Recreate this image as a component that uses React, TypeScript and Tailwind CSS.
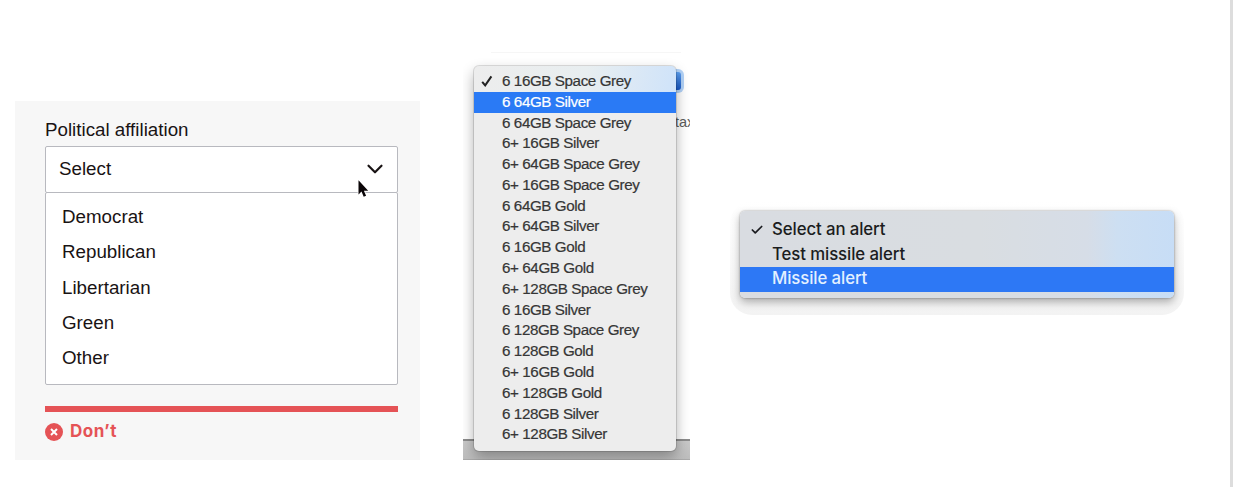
import { Check, ChevronDown } from "lucide-react";

const parties = ["Democrat", "Republican", "Libertarian", "Green", "Other"];

const phones = [
  "6 16GB Space Grey",
  "6 64GB Silver",
  "6 64GB Space Grey",
  "6+ 16GB Silver",
  "6+ 64GB Space Grey",
  "6+ 16GB Space Grey",
  "6 64GB Gold",
  "6+ 64GB Silver",
  "6 16GB Gold",
  "6+ 64GB Gold",
  "6+ 128GB Space Grey",
  "6 16GB Silver",
  "6 128GB Space Grey",
  "6 128GB Gold",
  "6+ 16GB Gold",
  "6+ 128GB Gold",
  "6 128GB Silver",
  "6+ 128GB Silver",
];

const alerts = ["Select an alert", "Test missile alert", "Missile alert"];

function Pointer() {
  return (
    <svg className="absolute left-[311px] top-[32px]" width="13" height="20" viewBox="0 0 13 20">
      <path
        d="M1.5 1.3v14.2l3-2.9 2.2 5.2 2.4-1-2.2-5.1h4.3z"
        fill="#0a0507"
        stroke="#fff"
        strokeWidth="1.6"
        paintOrder="stroke"
      />
    </svg>
  );
}

function AffiliationSelect() {
  return (
    <section className="mt-[101px] h-[359px] w-[405px] shrink-0 bg-[#f7f7f7] pl-[30px] pr-[22px] pt-[17px] text-[#191314]">
      <div className="h-[28px] text-[18.75px] leading-[24px]">Political affiliation</div>
      <div className="relative flex h-[47px] items-center justify-between rounded-[2px] border border-[#b8b9bf] bg-white pb-[2px] pl-[13px] pr-[12px]">
        <span className="text-[18.75px] leading-[24px]">Select</span>
        <ChevronDown className="size-[20px] scale-[1.3] overflow-visible" strokeWidth={2} />
        <Pointer />
      </div>
      <ul className="-mt-px h-[193px] rounded-[2px] border border-[#b8b9bf] bg-white pl-4 pt-[6px]">
        {parties.map((p) => (
          <li key={p} className="h-[35.3px] text-[18.75px] leading-[35.3px]">
            {p}
          </li>
        ))}
      </ul>
      <div className="mt-[21px] h-[6px] bg-[#e55356]" />
      <div className="mt-[10px] flex h-[19px] items-center gap-[7px] text-[#e55356]">
        <svg width="18" height="18" viewBox="0 0 18 18">
          <circle cx="9" cy="9" r="9" fill="#e55356" />
          <path d="M6 6l6 6M12 6l-6 6" stroke="#fff" strokeWidth="2" />
        </svg>
        <span className="font-['Inter',sans-serif] text-[17px] font-bold leading-[19px] tracking-[0.5px]">Don’t</span>
      </div>
    </section>
  );
}

function PhoneMenu() {
  return (
    <section className="relative ml-[43px] mt-[52px] h-[408px] w-[227px] shrink-0 overflow-hidden pl-[11px] pt-[14px]">
      <div className="absolute left-[28px] top-0 h-px w-[190px] bg-[#f6f6f6]" />
      <div className="absolute left-[200px] top-[17px] h-[24px] w-[21px] rounded-[6px] border-[3px] border-l-0 border-[#b3d3f8] bg-gradient-to-b from-[#5c9ff0] to-[#1658c8]" />
      <div className="absolute left-[212px] top-[61px] text-[14.5px] leading-[18px] text-[#5c5c5c]">tax</div>
      <div className="absolute bottom-0 left-0 h-[21px] w-full border-b border-t-2 border-b-[#aaa] border-t-[#8c8c8c] bg-gradient-to-b from-[#c9c9c9] to-[#bdbdbd]" />
      <ul className="relative h-[385px] w-[202px] rounded-[5px] bg-[#ededed] bg-[linear-gradient(100deg,#ededed_0%,#e8eef0_55%,#cfe3fa_100%)] bg-[length:100%_26px] bg-no-repeat pt-[5px] text-[15.2px] tracking-[-0.41px] text-[#363636] shadow-[0_0_0_1px_rgba(0,0,0,0.12),0_6px_14px_rgba(0,0,0,0.32)]">
        {phones.map((name, i) => (
          <li
            key={name}
            className={
              i === 1
                ? "flex h-[20.79px] items-center bg-[#2a7af5] text-white [-webkit-text-stroke:0.2px_currentColor]"
                : "flex h-[20.79px] items-center [-webkit-text-stroke:0.2px_currentColor]"
            }
          >
            <span className="flex w-[28px] justify-center pr-[3px]">
              {i === 0 && (
                <svg width="12" height="12" viewBox="0 0 12 12" fill="none">
                  <path d="M1.2 6.8l3 3.6L10.4 1.4" stroke="#222" strokeWidth="2" />
                </svg>
              )}
            </span>
            <span className="whitespace-nowrap">{name}</span>
          </li>
        ))}
      </ul>
    </section>
  );
}

function AlertMenu() {
  return (
    <section className="ml-[40px] mt-[201px] h-[114px] w-[454px] shrink-0 rounded-[22px] bg-gradient-to-b from-white to-[#f3f3f3] px-[10px] pt-[10px]">
      <ul className="h-[87px] rounded-[5px] bg-[linear-gradient(90deg,#d9dce1_0%,#d9dde1_55%,#d6dde7_80%,#cddff2_87%,#c7ddf6_100%)] pt-[7px] font-['Inter',sans-serif] text-[16.8px] font-medium tracking-[-0.1px] text-[#1b1c20] shadow-[0_0_2px_rgba(0,0,0,0.4),0_4px_9px_rgba(0,0,0,0.3)]">
        {alerts.map((label, i) => (
          <li
            key={label}
            className={
              i === 2
                ? "flex h-[24.6px] items-center bg-[#2d78f5] text-[#e3f0ff]"
                : "flex h-[24.6px] items-center"
            }
          >
            <span className="flex w-[32px] pl-[10px]">
              {i === 0 && <Check className="size-[14px]" strokeWidth={3} />}
            </span>
            <span className="-mt-px whitespace-nowrap">{label}</span>
          </li>
        ))}
      </ul>
    </section>
  );
}

export default function App() {
  return (
    <main className="flex h-[487px] w-[1233px] items-start overflow-hidden border-r-[3px] border-[#dddddd] bg-white pl-[15px] font-['Liberation_Sans',Arial,sans-serif]">
      <AffiliationSelect />
      <PhoneMenu />
      <AlertMenu />
    </main>
  );
}
